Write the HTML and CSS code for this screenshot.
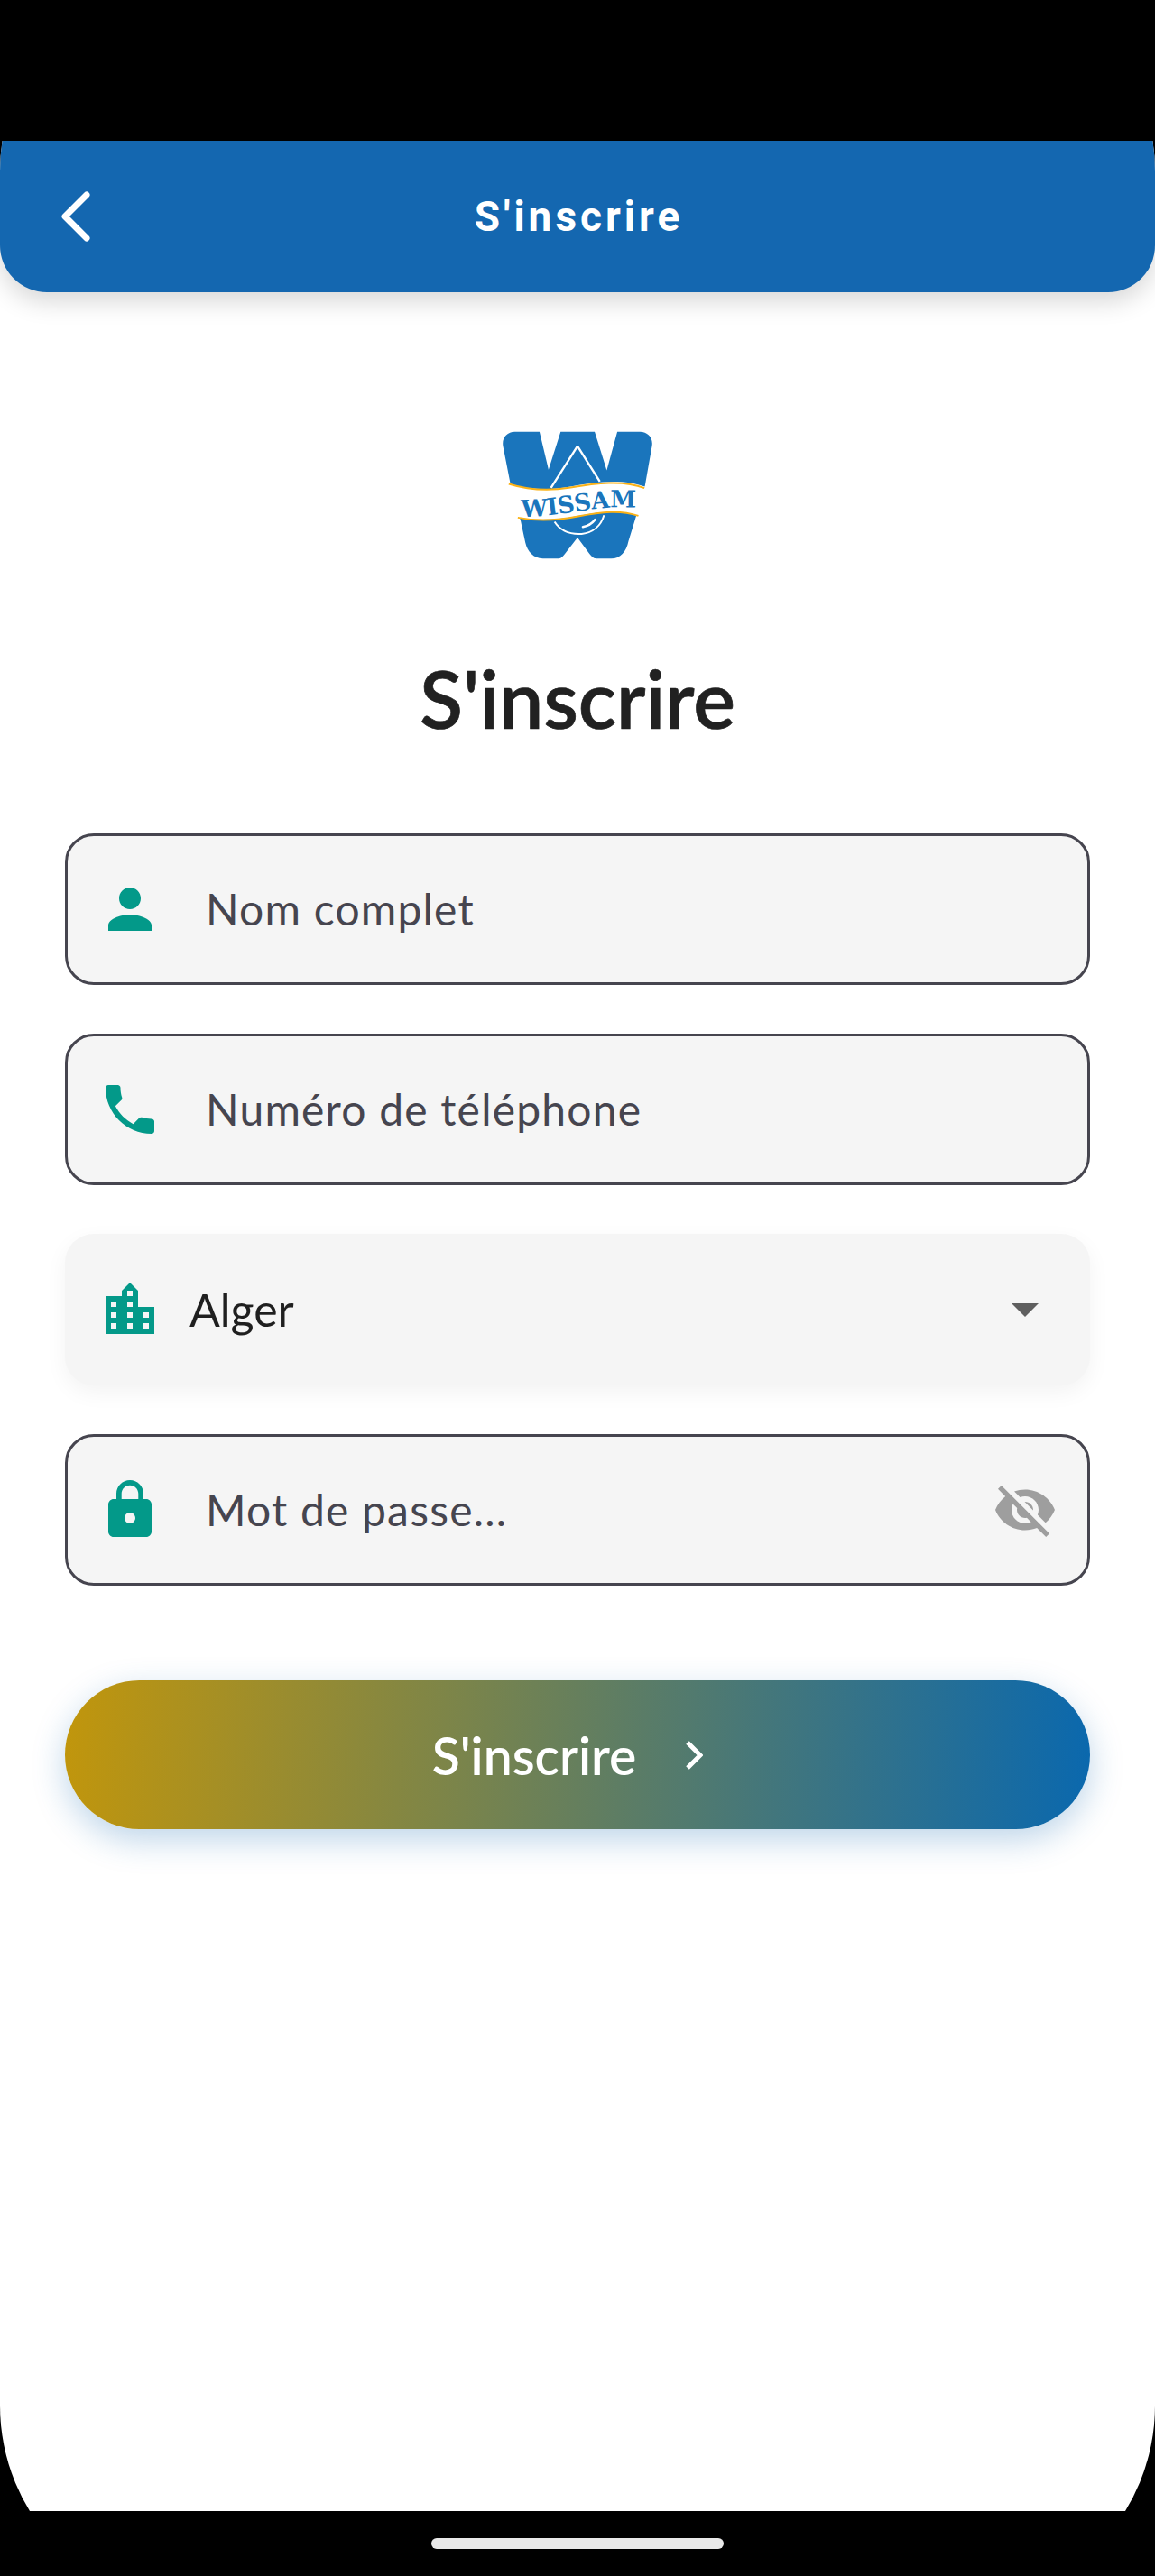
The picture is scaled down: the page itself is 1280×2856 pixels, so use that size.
FILE: index.html
```html
<!DOCTYPE html>
<html lang="fr">
<head>
<meta charset="utf-8">
<title>S'inscrire</title>
<link rel="stylesheet" href="styles.css">
</head>
<body>
<div class="statusbar"></div>
<div class="screen">
  <div class="sheet">
    <header class="appbar">
      <svg class="back" viewBox="0 0 40 60" width="40" height="60"><path d="M32 6 8 30l24 24" fill="none" stroke="#fff" stroke-width="7" stroke-linecap="round" stroke-linejoin="round"/></svg>
      <h2 class="appbar-title">S'inscrire</h2>
    </header>
    <div class="content">
      <svg class="logo" viewBox="110 55 496 425" width="166" height="142">
        <defs><path id="logo-arc" d="M160 337C240 345 330 322 420 313 480 307 520 305 565 312"/></defs>
        <path d="M150 57H232L262 183 302 57H415L455 185 490 57H565C592 57 610 78 605 105L582 235 550 345 527 420C520 455 500 478 470 478H420C410 478 402 468 396 460L358 408 318 460C312 468 305 478 295 478H243C212 478 192 455 185 425L170 355 135 228 111 105C106 78 124 57 150 57Z" fill="#1a75bc"/>
        <path d="M358 105 270 243M358 105 432 222" fill="none" stroke="#fff" stroke-width="7"/>
        <path d="M126 228C200 250 260 252 330 240 420 222 510 212 584 240L562 337C500 318 440 320 360 336 290 350 220 352 158 342Z" fill="#fff"/>
        <path d="M130 230C200 252 260 254 330 243 420 227 510 216 580 244" fill="none" stroke="#fbb216" stroke-width="6"/>
        <path d="M160 342C220 354 290 352 360 338 440 322 500 316 560 336" fill="none" stroke="#fbb216" stroke-width="6"/>
        <path d="M282 356C305 392 340 398 372 396 410 392 436 368 446 334" fill="none" stroke="#fff" stroke-width="6"/>
        <path d="M376 373C392 370 406 362 416 349" fill="none" stroke="#fff" stroke-width="8" stroke-linecap="round"/>
        <text class="logo-text"><textPath href="#logo-arc" startOffset="50%" text-anchor="middle">WISSAM</textPath></text>
      </svg>
      <h1 class="title">S'inscrire</h1>
      <form class="form">
        <label class="field bordered">
          <span class="icon-slot"><svg class="icon" viewBox="0 0 24 24"><path d="M12 12c2.21 0 4-1.79 4-4s-1.79-4-4-4-4 1.79-4 4 1.79 4 4 4zm0 2c-2.67 0-8 1.34-8 4v2h16v-2c0-2.66-5.33-4-8-4z"/></svg></span>
          <span class="placeholder">Nom complet</span>
        </label>
        <label class="field bordered">
          <span class="icon-slot"><svg class="icon" viewBox="0 0 24 24"><path d="M6.62 10.79c1.44 2.83 3.76 5.14 6.59 6.59l2.2-2.2c.27-.27.67-.36 1.02-.24 1.12.37 2.33.57 3.57.57.55 0 1 .45 1 1V20c0 .55-.45 1-1 1-9.39 0-17-7.61-17-17 0-.55.45-1 1-1h3.5c.55 0 1 .45 1 1 0 1.25.2 2.45.57 3.57.11.35.03.74-.25 1.02l-2.2 2.2z"/></svg></span>
          <span class="placeholder">Numéro de téléphone</span>
        </label>
        <div class="field select">
          <span class="icon-slot"><svg class="icon" viewBox="0 0 24 24"><path d="M15 11V5l-3-3-3 3v2H3v14h18V11h-6zm-8 8H5v-2h2v2zm0-4H5v-2h2v2zm0-4H5V9h2v2zm6 8h-2v-2h2v2zm0-4h-2v-2h2v2zm0-4h-2V9h2v2zm0-4h-2V5h2v2zm6 12h-2v-2h2v2zm0-4h-2v-2h2v2z"/></svg></span>
          <span class="select-value">Alger</span>
          <svg class="caret" viewBox="0 0 30 15" width="30" height="15"><path d="M0 0h30L15 15z"/></svg>
        </div>
        <label class="field bordered">
          <span class="icon-slot"><svg class="icon" viewBox="0 0 24 24"><path d="M18 8h-1V6c0-2.76-2.24-5-5-5S7 3.24 7 6v2H6c-1.1 0-2 .9-2 2v10c0 1.1.9 2 2 2h12c1.1 0 2-.9 2-2V10c0-1.1-.9-2-2-2zm-6 9c-1.1 0-2-.9-2-2s.9-2 2-2 2 .9 2 2-.9 2-2 2zm3.1-9H8.9V6c0-1.71 1.39-3.1 3.1-3.1s3.1 1.39 3.1 3.1v2z"/></svg></span>
          <span class="placeholder">Mot de passe...</span>
          <svg class="eye" viewBox="0 0 24 24"><path d="M12 7c2.76 0 5 2.24 5 5 0 .65-.13 1.26-.36 1.83l2.92 2.92c1.51-1.26 2.7-2.89 3.43-4.75-1.73-4.39-6-7.5-11-7.5-1.4 0-2.74.25-3.98.7l2.16 2.16C10.74 7.13 11.35 7 12 7zM2 4.27l2.28 2.28.46.46C3.08 8.3 1.78 10.02 1 12c1.73 4.39 6 7.5 11 7.5 1.55 0 3.03-.3 4.38-.84l.42.42L19.73 22 21 20.73 3.27 3 2 4.27zM7.53 9.8l1.55 1.55c-.05.21-.08.43-.08.65 0 1.66 1.34 3 3 3 .22 0 .44-.03.65-.08l1.55 1.55c-.67.33-1.41.53-2.2.53-2.76 0-5-2.24-5-5 0-.79.2-1.53.53-2.2zm4.31-.78l3.15 3.15.02-.16c0-1.66-1.34-3-3-3l-.17.01z"/></svg>
        </label>
        <button class="submit" type="button">
          <span>S'inscrire</span>
          <svg class="chev" viewBox="0 0 20 32" width="20" height="32"><path d="M3 2 17 16 3 30" fill="none" stroke="#fff" stroke-width="5"/></svg>
        </button>
      </form>
    </div>
  </div>
</div>
<div class="navbar"><div class="home-pill"></div></div>
</body>
</html>
```
FILE: styles.css
```css
* { box-sizing: border-box; }
html, body { margin: 0; padding: 0; }
body { width: 1280px; height: 2856px; background: #000; font-family: "Lato", sans-serif; overflow: hidden; }
.statusbar { height: 156px; background: #000; }
.screen { height: 2628px; overflow: hidden; }
.sheet { height: 2925px; margin-top: -190px; padding-top: 190px; background: #fff; border-radius: 224px; overflow: hidden; }
.appbar { height: 168px; background: #1467b0; border-radius: 0 0 52px 52px; box-shadow: 0 10px 28px rgba(0,0,0,.16); display: flex; align-items: center; justify-content: center; position: relative; }
.back { position: absolute; left: 64px; top: 54px; }
.appbar-title { margin: 0; padding-left: 3px; color: #fff; font-family: "Roboto", sans-serif; font-weight: 700; font-size: 46px; letter-spacing: 4px; line-height: 1; }
.content { padding: 154px 72px 0; display: flex; flex-direction: column; align-items: center; }
.logo { display: block; }
.title { margin: 98px 0 0; color: #212121; font-family: "Lato", sans-serif; font-weight: 600; font-size: 88px; line-height: 112px; -webkit-text-stroke: .7px #212121; }
.form { width: 100%; margin-top: 94px; display: flex; flex-direction: column; gap: 54px; }
.field { height: 168px; background: #f5f5f5; border-radius: 32px; display: flex; align-items: center; padding-left: 36px; position: relative; }
.bordered { border: 3px solid #46454f; padding-left: 33px; }
.select { box-shadow: 0 8px 24px rgba(0,0,0,.05); padding-left: 36px; }
.icon-slot { width: 72px; height: 72px; flex: none; display: block; margin-right: 48px; }
.icon { display: block; width: 72px; height: 72px; fill: #039989; }
.select .icon-slot { margin-right: 30px; }
.placeholder { color: #46454f; font-size: 48px; letter-spacing: 1.2px; padding-bottom: 2px; }
.select-value { color: #1f1f1f; font-size: 50px; flex: 1; }
.caret { fill: #5f5f5f; margin-right: 57px; }
.eye { position: absolute; right: 33px; top: 50%; margin-top: -36px; width: 72px; height: 72px; fill: #9e9e9e; }
.submit { margin-top: 51px; height: 165px; padding: 0 22px 0 0; border: 0; border-radius: 83px; background: linear-gradient(93deg, #c1960c, #0a68ae); box-shadow: 0 12px 36px rgba(20,103,176,.28); color: #fff; font-family: "Lato", sans-serif; font-weight: 600; font-size: 57px; display: flex; align-items: center; justify-content: center; gap: 54px; }
.navbar { height: 72px; padding-top: 30px; display: flex; justify-content: center; }
.home-pill { width: 324px; height: 12px; border-radius: 6px; background: #e9e9e9; }
.logo-text { font-family: "DejaVu Serif", serif; font-weight: 700; font-size: 78px; fill: #1a75bc; }
```
